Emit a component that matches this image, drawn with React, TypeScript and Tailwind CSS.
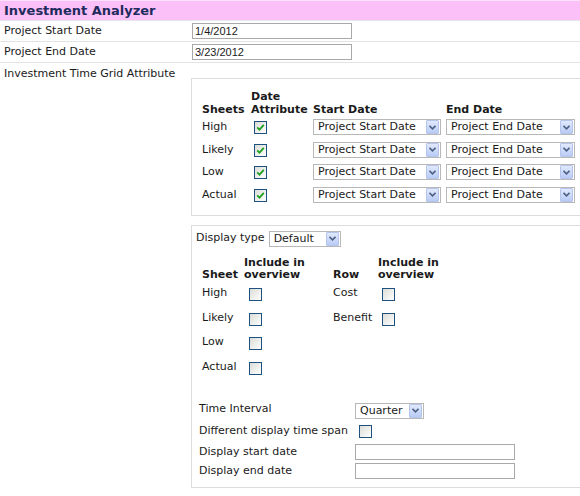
import React from "react";

function Arrow() {
  return (
    <div className="w-[13px] h-[14px] mr-[1px] border border-[#b5c4ea] bg-gradient-to-b from-[#e1e9fd] to-[#b9cbf5] flex items-center justify-center rounded-[1px]">
      <svg width="7" height="5" viewBox="0 0 7 5">
        <path d="M0.5 0.8 L3.5 3.8 L6.5 0.8" fill="none" stroke="#4d6185" strokeWidth="1.6" />
      </svg>
    </div>
  );
}

function Select({ text, w }: { text: string; w: string }) {
  return (
    <div className={`${w} h-[16px] border border-[#b8b8b8] bg-white flex items-center justify-between`}>
      <span className="pl-[4px] leading-[14px] whitespace-nowrap">{text}</span>
      <Arrow />
    </div>
  );
}

function Check({ checked }: { checked?: boolean }) {
  return (
    <div className="w-[13px] h-[13px] border border-[#1c5180] bg-gradient-to-br from-[#dcdcd7] to-[#ffffff] flex items-center justify-center">
      {checked && (
        <svg width="9" height="9" viewBox="0 0 9 9">
          <path d="M1.2 4.3 L3.5 6.6 L7.8 1.8" fill="none" stroke="#21a121" strokeWidth="1.8" />
        </svg>
      )}
    </div>
  );
}

function TextBox({ value, w }: { value?: string; w: string }) {
  return (
    <div className={`${w} h-[16px] border border-[#a9a9a9] bg-white flex items-center`}>
      <span className="pl-[2px] font-['Liberation_Sans'] text-[11px] leading-[14px]">{value}</span>
    </div>
  );
}

export default function App() {
  const sheets = ["High", "Likely", "Low", "Actual"];
  return (
    <div className="w-[580px] h-[496px] overflow-hidden bg-white font-['DejaVu_Sans',sans-serif] text-[11px] text-[#1a1a1a]">
      <div className="h-[21px] bg-[#fbc0f8] border-t border-[#fde0fb] border-b border-b-[#e6e6e6] flex items-center pl-[4px]">
        <span className="font-bold text-[13px] text-[#1e2b5c] leading-[18px]">Investment Analyzer</span>
      </div>
      <div className="h-[21px] flex items-center border-b border-[#e3e3e3]">
        <div className="w-[192px] shrink-0 pl-[4px]">Project Start Date</div>
        <TextBox value="1/4/2012" w="w-[160px]" />
      </div>
      <div className="h-[21px] flex items-center border-b border-[#e3e3e3]">
        <div className="w-[192px] shrink-0 pl-[4px]">Project End Date</div>
        <TextBox value="3/23/2012" w="w-[160px]" />
      </div>
      <div className="flex">
        <div className="w-[191px] shrink-0 pl-[4px] pt-[4px] leading-[13px]">Investment Time Grid Attribute</div>
        <div className="flex flex-col pt-[15px] shrink-0">
          {/* Panel 1 */}
          <div className="w-[395px] h-[138px] border border-[#dcdcdc] pl-[10px] pt-[12px]">
            <div className="flex items-end font-bold leading-[13px] h-[25px]">
              <div className="w-[49px]">Sheets</div>
              <div className="w-[62px]">Date<br />Attribute</div>
              <div className="w-[133px]">Start Date</div>
              <div>End Date</div>
            </div>
            <div>
              {sheets.map((s) => (
                <div key={s} className="flex h-[22.5px] items-center">
                  <div className="w-[49px] leading-[13px] -mt-[1px]">{s}</div>
                  <div className="w-[62px] pl-[3px] pt-[1px]"><Check checked /></div>
                  <div className="w-[133px]"><Select text="Project Start Date" w="w-[128px]" /></div>
                  <Select text="Project End Date" w="w-[129px]" />
                </div>
              ))}
            </div>
          </div>
          {/* Panel 2 */}
          <div className="mt-[9px] w-[395px] h-[263px] border border-[#dcdcdc] pl-[4px] pt-[4px]">
            <div className="flex items-center h-[17px]">
              <span className="pr-[4px]">Display type</span>
              <Select text="Default" w="w-[72px]" />
            </div>
            <div className="flex items-end font-bold leading-[12px] h-[34px] pl-[6px]">
              <div className="w-[42px]">Sheet</div>
              <div className="w-[89px]">Include in<br />overview</div>
              <div className="w-[45px]">Row</div>
              <div>Include in<br />overview</div>
            </div>
            <div className="pl-[6px] pt-[5px]">
              {sheets.map((s, i) => (
                <div key={s} className="flex h-[24.7px] items-start">
                  <div className="w-[47px] leading-[13px]">{s}</div>
                  <div className="w-[84px] pt-[2px]"><Check /></div>
                  {i < 2 && (
                    <>
                      <div className="w-[49px] leading-[13px]">{i === 0 ? "Cost" : "Benefit"}</div>
                      <div className="pt-[2px]"><Check /></div>
                    </>
                  )}
                </div>
              ))}
            </div>
            <div className="pl-[3px] pt-[15px]">
              <div className="flex items-center h-[22px]">
                <div className="w-[156px] -mt-[3px]">Time Interval</div>
                <Select text="Quarter" w="w-[69px]" />
              </div>
              <div className="flex items-center h-[21px] -mt-[1px]">
                <div className="w-[160px]">Different display time span</div>
                <Check />
              </div>
              <div className="flex items-center h-[20px]">
                <div className="w-[156px]">Display start date</div>
                <TextBox w="w-[160px]" />
              </div>
              <div className="flex items-center h-[19px]">
                <div className="w-[156px]">Display end date</div>
                <TextBox w="w-[160px]" />
              </div>
            </div>
          </div>
        </div>
      </div>
    </div>
  );
}
